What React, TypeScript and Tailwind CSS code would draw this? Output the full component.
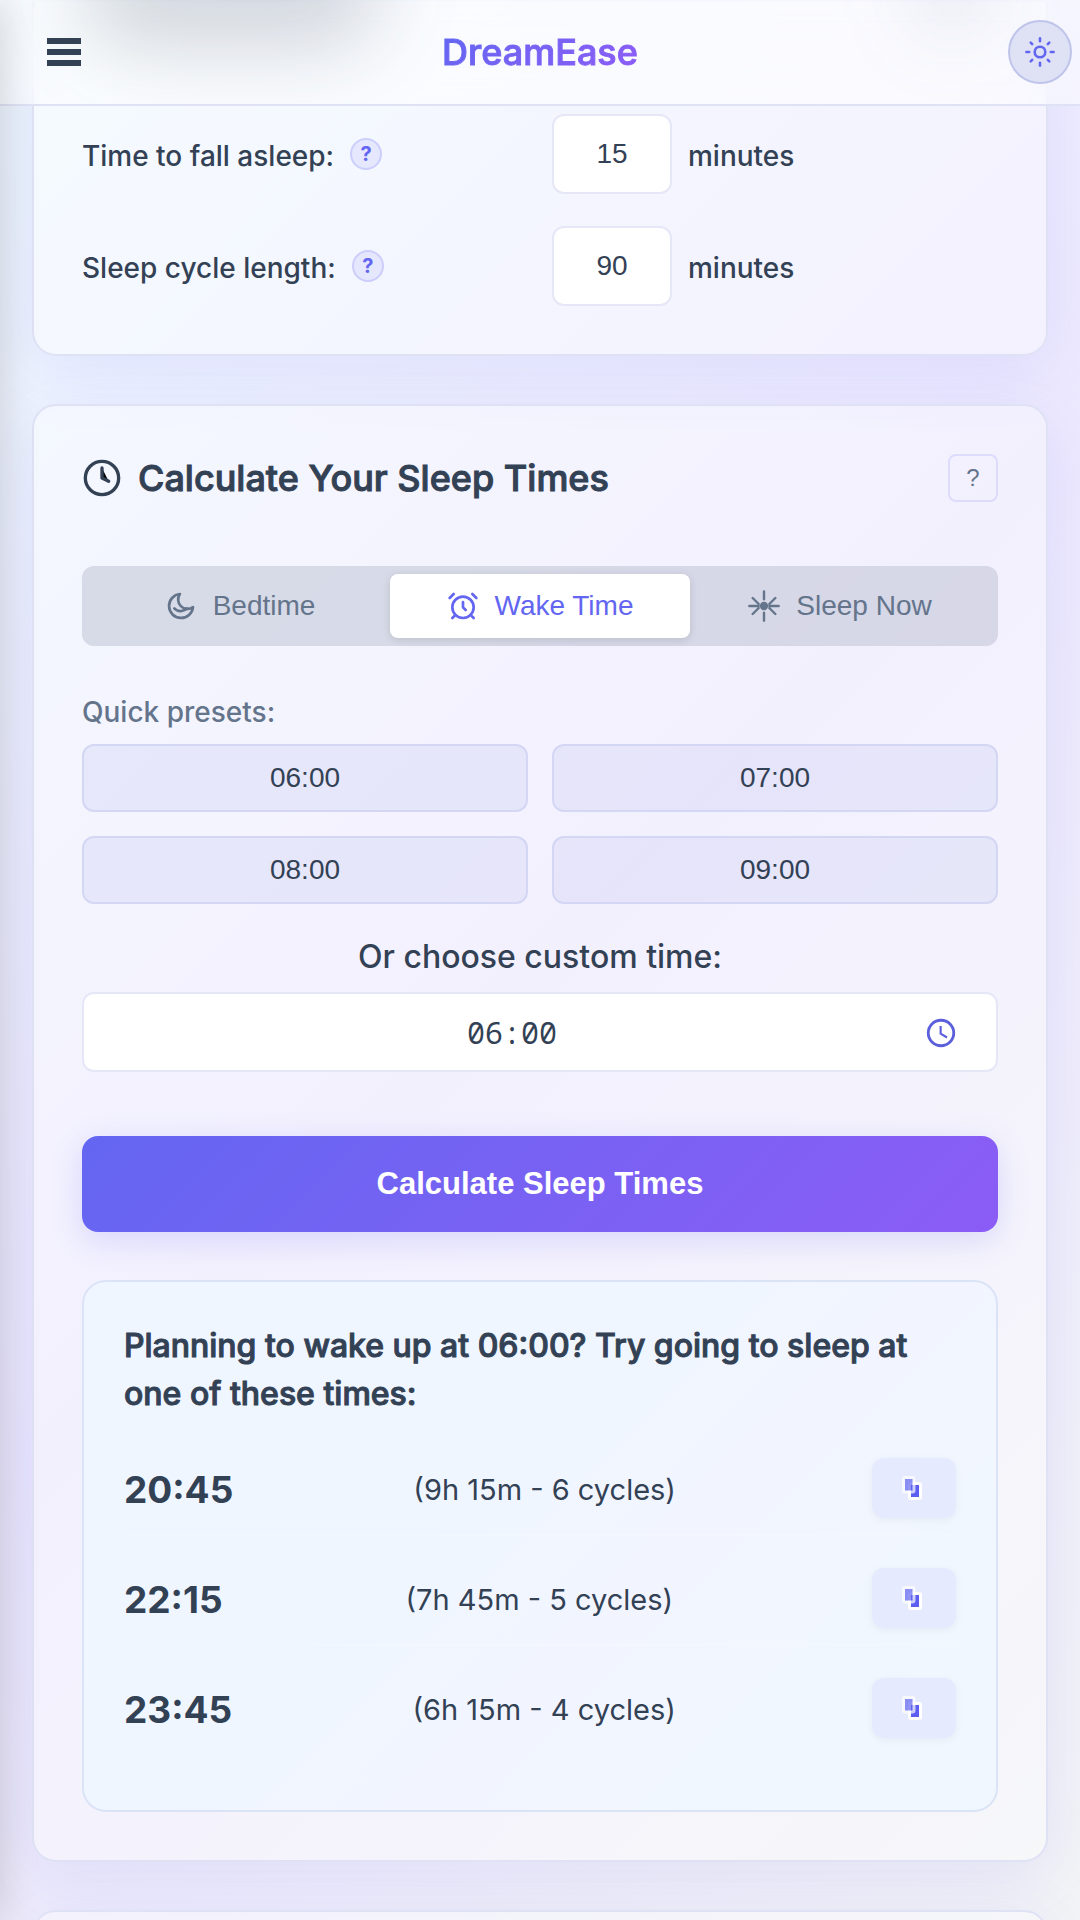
import { useState } from 'react';
import type { ReactNode } from 'react';

const presets = ['06:00', '07:00', '08:00', '09:00'];

const results = [
  { time: '20:45', detail: '(9h 15m - 6 cycles)' },
  { time: '22:15', detail: '(7h 45m - 5 cycles)' },
  { time: '23:45', detail: '(6h 15m - 4 cycles)' },
];

const iconProps = {
  viewBox: '0 0 24 24',
  fill: 'none',
  stroke: 'currentColor',
  strokeWidth: 2,
  strokeLinecap: 'round' as const,
  strokeLinejoin: 'round' as const,
  'aria-hidden': true,
};

function MenuIcon() {
  return (
    <svg width="34" height="28" viewBox="0 0 34 28" fill="currentColor" aria-hidden="true">
      <rect width="34" height="6" />
      <rect y="11" width="34" height="6" />
      <rect y="22" width="34" height="6" />
    </svg>
  );
}

function SunIcon() {
  return (
    <svg {...iconProps} viewBox="0 0 32 32" strokeWidth={2.6} className="size-8">
      <circle cx="16" cy="16" r="5.3" />
      <path d="M16 2.4v2.8M16 26.8v2.8M2.400 16h2.800M26.800 16h2.800M6.700 6.700l1.500 1.500M23.800 23.800l1.500 1.500M6.700 25.300l1.500-1.500M23.800 8.200l1.500-1.500" />
    </svg>
  );
}

function ClockIcon() {
  return (
    <svg {...iconProps} className="size-10 shrink-0">
      <circle cx="12" cy="12" r="10" />
      <path d="M12 6v6l4 2" fill="#000" />
    </svg>
  );
}

function MoonIcon() {
  return (
    <svg {...iconProps} className="size-8">
      <path d="M21 12.79A9 9 0 1 1 11.21 3 7 7 0 0 0 21 12.79z" />
      <path d="M7 13.8q2 2.200 5 2t4.500-2" />
    </svg>
  );
}

function AlarmIcon() {
  return (
    <svg {...iconProps} className="size-8">
      <circle cx="12" cy="13" r="8" />
      <path d="M12 9v4l2 2M5 3 2 6M22 6l-3-3M6.38 18.7 4 21M17.64 18.67 20 21" />
    </svg>
  );
}

function BurstIcon() {
  return (
    <svg {...iconProps} strokeWidth={1.8} className="size-8">
      <circle cx="12" cy="12" r="3.1" fill="currentColor" stroke="none" />
      <path d="M12 1v6M12 17v6M1 12h7M16 12h7M3.500 6l4.500 4.500M20.500 6l-4.500 4.500M3.500 18l4.500-4.500M20.500 18l-4.500-4.500" />
    </svg>
  );
}

function PickerIcon() {
  return (
    <svg viewBox="0 0 24 24" fill="none" stroke="currentColor" className="size-[34px]" aria-hidden="true">
      <circle cx="12" cy="12" r="9" strokeWidth="2" />
      <path d="M11.750 7v5.500l4.500 2.700" strokeWidth="1.5" />
    </svg>
  );
}

function CopyIcon() {
  return (
    <svg viewBox="0 0 32 32" className="size-8" stroke="#fff" strokeWidth="3" aria-hidden="true">
      <rect x="11.500" y="11.500" width="11" height="15" rx="1.500" fill="#5b5ef0" />
      <rect x="5.500" y="5.500" width="10.500" height="14.500" rx="1.500" fill="#6366f1" opacity="0.7" />
    </svg>
  );
}

function Card({ children, className }: { children?: ReactNode; className: string }) {
  return (
    <section
      className={`border-2 border-[#dfe1f5] bg-white/35 px-12 pb-12 shadow-[0_16px_64px_rgba(99,102,241,0.12)] ${className}`}
    >
      {children}
    </section>
  );
}

function SettingRow({ id, label, value }: { id: string; label: string; value: string }) {
  return (
    <div className="grid grid-cols-2 items-center gap-6">
      <div className="flex items-center gap-4">
        <label htmlFor={id} className="pt-1 font-medium">
          {label}
        </label>
        <button
          type="button"
          aria-label={`About ${label}`}
          className="flex size-8 items-center justify-center rounded-full border-2 border-[#6366f1]/20 bg-[#6366f1]/10 text-xl font-bold text-[#6366f1]"
        >
          ?
        </button>
      </div>
      <div className="flex items-center gap-4">
        <input
          id={id}
          type="text"
          inputMode="numeric"
          defaultValue={value}
          className="h-20 w-30 rounded-xl border-2 border-[#e6e7f6] bg-white text-center font-['Liberation_Sans',sans-serif]"
        />
        <span className="pt-1 font-medium">minutes</span>
      </div>
    </div>
  );
}

export default function App() {
  const [mode, setMode] = useState('Wake Time');
  const tabs = [
    { name: 'Bedtime', icon: <MoonIcon /> },
    { name: 'Wake Time', icon: <AlarmIcon /> },
    { name: 'Sleep Now', icon: <BurstIcon /> },
  ];

  return (
    <div className="h-screen overflow-hidden bg-[linear-gradient(135deg,#f0f9ff_0%,#ede9fe_50%,#f3f4f6_100%)] font-['Inter',sans-serif] text-[28px] leading-[40px] text-[#334155]">
      <header className="relative z-10 grid grid-cols-[1fr_auto_1fr] items-center overflow-hidden border-b-2 border-[#dfe1f5] bg-white/50 py-5 backdrop-blur-xl">
        <div className="pointer-events-none absolute -top-16 left-20 h-28 w-75 rounded-full bg-[#334155]/20 blur-2xl" />
        <div className="pointer-events-none absolute -top-16 right-24 h-24 w-16 rounded-full bg-[#64748b]/15 blur-2xl" />
        <button type="button" aria-label="Open menu" className="relative ml-[47px] justify-self-start">
          <MenuIcon />
        </button>
        <span className="relative bg-linear-135 from-[#6366f1] to-[#8b5cf6] bg-clip-text text-4xl font-medium text-transparent [-webkit-text-stroke:1px]">
          DreamEase
        </span>
        <button
          type="button"
          aria-label="Switch theme"
          className="relative mr-2 flex size-16 items-center justify-center justify-self-end rounded-full border-2 border-[#bfc5ea] bg-[#dfe1f5] text-[#6366f1]"
        >
          <SunIcon />
        </button>
      </header>

      <main className="flex flex-col gap-12 px-8">
        <Card className="-mt-26 rounded-b-3xl border-t-0 pt-28">
          <div className="flex flex-col gap-8">
            <SettingRow id="fall-asleep" label="Time to fall asleep:" value="15" />
            <SettingRow id="cycle-length" label="Sleep cycle length:" value="90" />
          </div>
        </Card>

        <Card className="rounded-3xl pt-12">
          <div className="flex items-center justify-between">
            <h2 className="flex items-center gap-4 text-4xl font-medium">
              <ClockIcon />
              <span className="[-webkit-text-stroke:1px]">Calculate Your Sleep Times</span>
            </h2>
            <button
              type="button"
              aria-label="Help"
              className="h-12 w-[50px] rounded-lg border-2 border-[#6366f1]/15 font-['Liberation_Sans',sans-serif] text-2xl text-[#64748b]"
            >
              ?
            </button>
          </div>

          <div className="mt-16 grid grid-cols-3 rounded-xl bg-[#64748b]/20 p-2 font-['Liberation_Sans',sans-serif]">
            {tabs.map((tab) => (
              <button
                key={tab.name}
                type="button"
                aria-pressed={mode === tab.name}
                onClick={() => setMode(tab.name)}
                className={`flex h-16 items-center justify-center gap-4 rounded-lg ${
                  mode === tab.name
                    ? 'bg-white text-[#6366f1] shadow-[0_2px_8px_rgba(0,0,0,0.12)]'
                    : 'text-[#64748b]'
                }`}
              >
                {tab.icon}
                {tab.name}
              </button>
            ))}
          </div>

          <h3 className="mt-12 leading-[36px] font-medium text-[#64748b]">Quick presets:</h3>
          <div className="mt-[14px] grid grid-cols-2 gap-6">
            {presets.map((preset) => (
              <button
                key={preset}
                type="button"
                className="h-17 rounded-xl border-2 border-[#d4d7f3] bg-[#5058c8]/8 font-['Liberation_Sans',sans-serif]"
              >
                {preset}
              </button>
            ))}
          </div>

          <label htmlFor="custom-time" className="mt-8 block text-center text-[32px] leading-[42px] font-medium">
            Or choose custom time:
          </label>
          <div className="mt-[14px] flex h-20 items-center rounded-xl border-2 border-[#e6e7f6] bg-white pt-0.5 pr-[38px] pl-4">
            <input
              id="custom-time"
              type="text"
              defaultValue="06:00"
              className="min-w-0 flex-1 bg-transparent text-center font-['Noto_Sans_Mono',monospace] text-[30px]"
            />
            <button type="button" aria-label="Pick a time" className="text-[#5b5fdc]">
              <PickerIcon />
            </button>
          </div>

          <button
            type="button"
            className="mt-16 h-24 w-full rounded-2xl bg-linear-135 from-[#6366f1] to-[#8b5cf6] font-['Liberation_Sans',sans-serif] text-[31px] font-bold text-white shadow-[0_8px_32px_rgba(99,102,241,0.2)]"
          >
            Calculate Sleep Times
          </button>

          <div className="mt-12 rounded-3xl border-2 border-[#dbe4f7] bg-[linear-gradient(135deg,#eff6ff_0%,#eff6ff_40%,#f2f5ff_60%,#f0f7ff_85%)] p-10">
            <h3 className="mb-6 text-[32px] leading-[48px] font-medium [-webkit-text-stroke:1px]">
              Planning to wake up at 06:00? Try going to sleep at one of these times:
            </h3>
            <ul>
              {results.map((result) => (
                <li
                  key={result.time}
                  className="mb-4 flex items-center justify-between border-b-2 border-white/20 py-4 last:border-b-0"
                >
                  <span className="pt-1 text-[37px] font-bold">{result.time}</span>
                  <span className="mr-4 pt-1 text-[29px]">{result.detail}</span>
                  <button
                    type="button"
                    aria-label={`Copy ${result.time}`}
                    className="flex h-15 w-21 items-center justify-center rounded-xl bg-[#e6eafe] shadow-[0_2px_8px_rgba(0,0,0,0.05)]"
                  >
                    <CopyIcon />
                  </button>
                </li>
              ))}
            </ul>
          </div>
        </Card>

        <Card className="h-60 rounded-3xl" />
      </main>

      <aside className="pointer-events-none fixed inset-y-0 -left-10 z-20 w-10 shadow-[0_0_40px_rgba(0,0,0,0.18)]" />
    </div>
  );
}
